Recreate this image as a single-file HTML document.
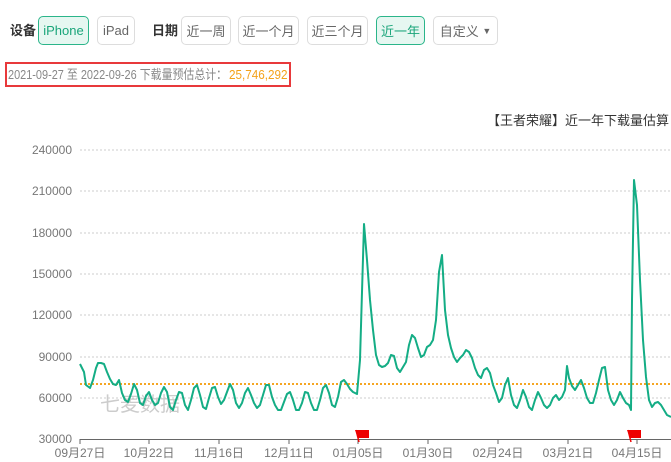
<!DOCTYPE html>
<html><head><meta charset="utf-8"><style>
body{margin:0;width:671px;height:462px;background:#fff;font-family:"Liberation Sans","Noto Sans CJK SC",sans-serif;position:relative;overflow:hidden}
.lb{position:absolute;top:22px;font-size:13px;font-weight:bold;color:#333;line-height:17px}
.b{position:absolute;top:16px;height:29px;box-sizing:border-box;border:1px solid #ddd;border-radius:5px;font-size:13px;color:#666;display:flex;align-items:center;justify-content:center}
.on{background:#e6f7f1;border-color:#2bb58a;color:#1aa57a}
.s{position:absolute;top:67px;font-size:13px;line-height:16px;white-space:nowrap;transform-origin:0 0}
</style></head><body>
<div class="lb" style="left:10px">设备</div>
<div class="b on" style="left:38px;width:51px">iPhone</div>
<div class="b" style="left:97px;width:38px">iPad</div>
<div class="lb" style="left:152px">日期</div>
<div class="b" style="left:181px;width:50px">近一周</div>
<div class="b" style="left:238px;width:61px">近一个月</div>
<div class="b" style="left:307px;width:61px">近三个月</div>
<div class="b on" style="left:376px;width:49px">近一年</div>
<div class="b" style="left:433px;width:65px">自定义&nbsp;<span style="font-size:9px">▼</span></div>
<div style="position:absolute;left:5px;top:62px;width:286px;height:25px;box-sizing:border-box;border:2px solid #e8393b"></div>
<div class="s" style="left:8px;color:#888;transform:scaleX(0.84)">2021-09-27 至 2022-09-26 下载量预估总计：</div>
<div class="s" style="left:229px;color:#f4a21a;transform:scaleX(0.9)">25,746,292</div>
<div style="position:absolute;right:2px;top:110px;font-size:13px;color:#333">【王者荣耀】近一年下载量估算</div>
<svg width="671" height="462" style="position:absolute;left:0;top:0" font-family="Liberation Sans" font-size="12" fill="#777">
<g stroke="#ccc" stroke-dasharray="2,2">
<line x1="80" x2="671" y1="150" y2="150"/><line x1="80" x2="671" y1="191" y2="191"/><line x1="80" x2="671" y1="233" y2="233"/><line x1="80" x2="671" y1="274" y2="274"/><line x1="80" x2="671" y1="315" y2="315"/><line x1="80" x2="671" y1="357" y2="357"/><line x1="80" x2="671" y1="398" y2="398"/></g>
<g text-anchor="end"><text x="72" y="154">240000</text><text x="72" y="195">210000</text><text x="72" y="237">180000</text><text x="72" y="278">150000</text><text x="72" y="319">120000</text><text x="72" y="361">90000</text><text x="72" y="402">60000</text><text x="72" y="443">30000</text></g>
<text x="100" y="411" font-size="20" fill="#ccc" font-family="Noto Sans CJK SC">七麦数据</text>
<line x1="80" x2="671" y1="439.5" y2="439.5" stroke="#666"/>
<g stroke="#666"><line x1="80" x2="80" y1="439" y2="444"/><line x1="149" x2="149" y1="439" y2="444"/><line x1="219" x2="219" y1="439" y2="444"/><line x1="289" x2="289" y1="439" y2="444"/><line x1="358" x2="358" y1="439" y2="444"/><line x1="428" x2="428" y1="439" y2="444"/><line x1="498" x2="498" y1="439" y2="444"/><line x1="568" x2="568" y1="439" y2="444"/><line x1="637" x2="637" y1="439" y2="444"/></g>
<g text-anchor="middle" font-family="Liberation Sans,Noto Sans CJK SC"><text x="80" y="457">09月27日</text><text x="149" y="457">10月22日</text><text x="219" y="457">11月16日</text><text x="289" y="457">12月11日</text><text x="358" y="457">01月05日</text><text x="428" y="457">01月30日</text><text x="498" y="457">02月24日</text><text x="568" y="457">03月21日</text><text x="637" y="457">04月15日</text></g>
<line x1="80" x2="671" y1="384" y2="384" stroke="#f5a623" stroke-width="2" stroke-dasharray="2,2"/>
<polyline fill="none" stroke="#14ad85" stroke-width="2" stroke-linejoin="round" points="80,364 84,372 86,385 90,388 93,380 96,368 98,363 101,363 104,364 107,372 110,379 113,384 116,385 119,380 122,393 125,400 128,402 131,394 134,384 137,390 140,403 143,405 146,396 149,392 152,400 155,405 158,403 161,393 164,387 167,392 170,407 173,410 176,400 179,392 182,393 185,405 188,410 191,400 194,388 197,385 200,395 203,407 206,409 209,398 212,388 215,387 218,397 221,404 224,400 227,392 230,384 233,390 236,403 239,408 242,403 245,393 248,388 251,395 254,403 257,408 260,405 263,395 266,385 269,385 272,397 275,405 278,410 281,410 284,402 287,394 290,392 293,400 296,410 299,410 302,403 305,392 308,393 311,403 314,410 317,410 320,400 323,388 326,385 329,393 332,405 335,407 338,397 341,382 344,380 347,384 350,389 353,392 357,394 360,360 364,224 367,260 370,300 373,330 376,355 379,365 382,367 385,366 388,363 391,355 394,356 397,368 400,372 403,367 406,362 409,345 412,335 415,338 418,348 421,357 424,355 427,347 430,345 433,340 436,320 439,272 442,255 445,310 448,335 451,348 454,357 457,362 460,358 463,355 466,350 469,352 472,358 475,368 478,375 481,378 484,370 487,368 490,373 493,385 496,393 499,402 502,398 505,385 508,378 511,395 514,405 517,408 520,400 523,390 526,397 529,407 532,410 535,400 538,392 541,398 544,405 547,408 550,405 553,398 556,395 559,400 562,397 565,390 567,366 569,378 572,386 575,390 578,385 581,380 584,388 587,398 590,403 593,403 596,393 599,380 602,368 605,367 608,390 611,400 614,405 617,400 620,392 623,398 626,403 629,405 631,410 632,300 634,180 637,205 640,280 643,340 646,377 649,400 652,407 655,403 658,402 661,405 664,410 667,415 671,417"/>
<g fill="#e00"><path d="M355,430 h14 v8 h-11 z"/><line x1="356" y1="430" x2="359" y2="442" stroke="#e00" stroke-width="1.5"/><path d="M627,430 h14 v8 h-11 z"/><line x1="628" y1="430" x2="631" y2="442" stroke="#e00" stroke-width="1.5"/></g>
</svg>
</body></html>
